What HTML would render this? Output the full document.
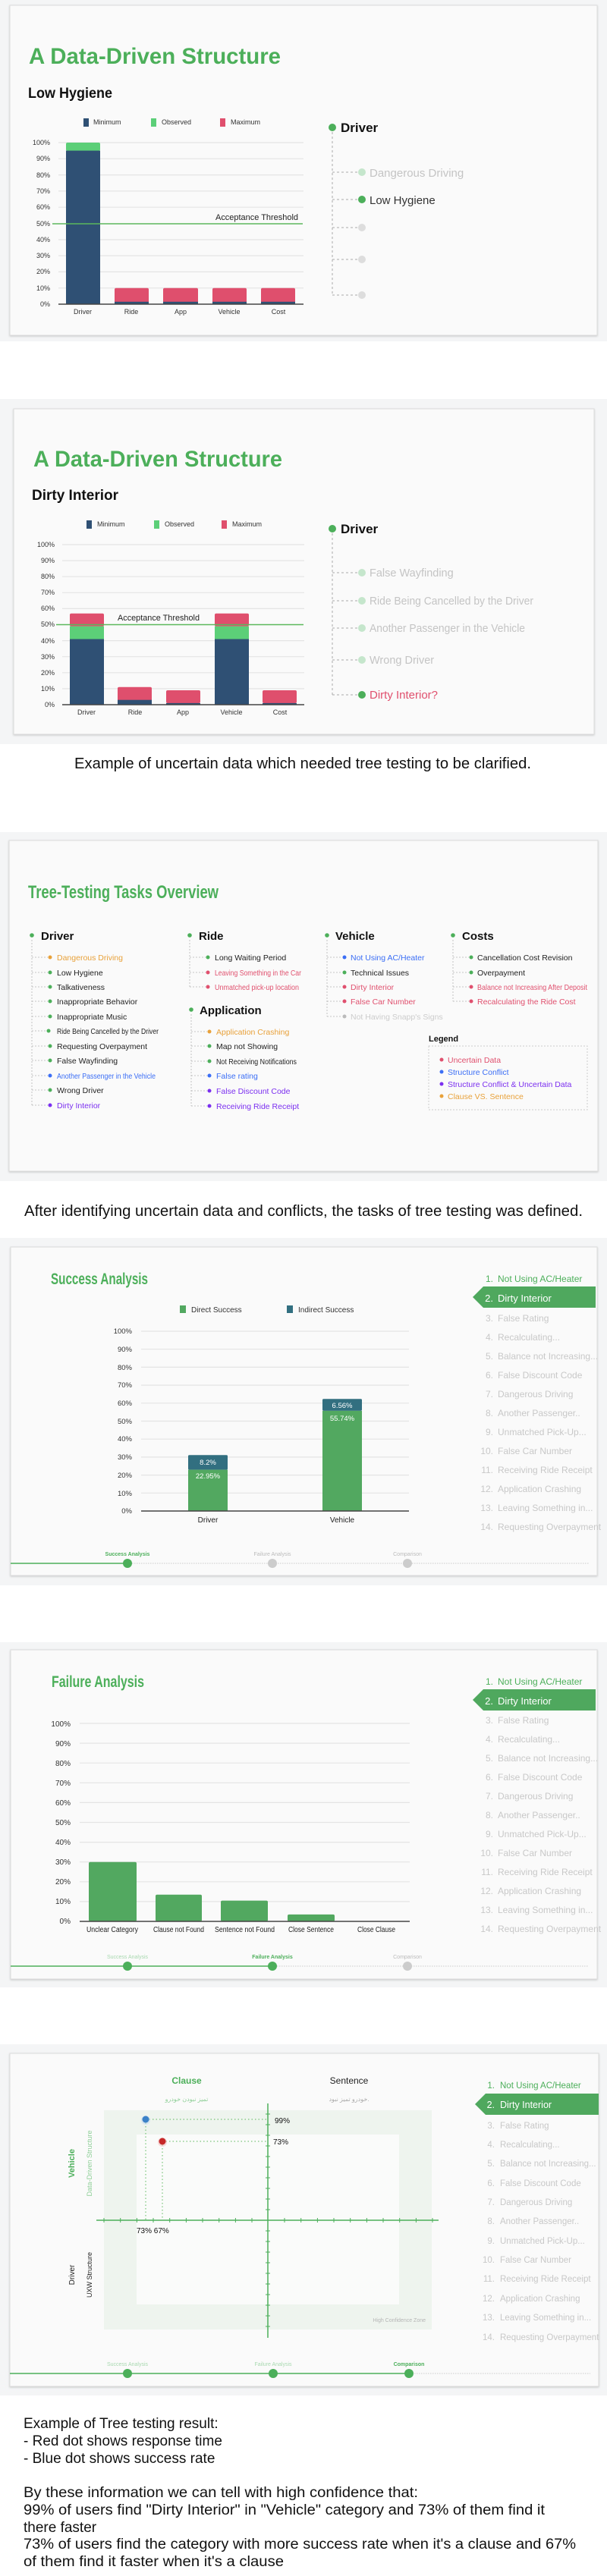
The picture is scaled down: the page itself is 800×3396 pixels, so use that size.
<!DOCTYPE html>
<html><head><meta charset="utf-8"><style>
html,body{margin:0;padding:0;background:#fff;}
svg{display:block;}
text{font-family:"Liberation Sans","Noto Sans CJK SC",sans-serif;}
</style></head><body>
<svg width="800" height="3396" viewBox="0 0 800 3396" xmlns="http://www.w3.org/2000/svg">
<defs>
<filter id="sh" x="-5%" y="-5%" width="110%" height="110%"><feDropShadow dx="0" dy="1" stdDeviation="1.2" flood-color="#000" flood-opacity="0.18"/></filter>
</defs>
<rect width="800" height="3396" fill="#fff"/>

<!-- ===== CARD 1 ===== -->
<rect x="0" y="0" width="800" height="450" fill="#f4f5f6"/>
<rect x="13" y="7" width="774" height="435" fill="#fafafa" stroke="#dcdcdc" filter="url(#sh)"/>
<text x="38" y="84" font-size="30" font-weight="bold" fill="#4caf5a" textLength="332" lengthAdjust="spacingAndGlyphs">A Data-Driven Structure</text>
<text x="37" y="129" font-size="19" font-weight="bold" fill="#111" textLength="111" lengthAdjust="spacingAndGlyphs">Low Hygiene</text>
<g font-size="9" fill="#333">
<rect x="110" y="156" width="7" height="11" fill="#2f5074"/><text x="123" y="164">Minimum</text>
<rect x="199" y="156" width="7" height="11" fill="#5ccf78"/><text x="213" y="164">Observed</text>
<rect x="290" y="156" width="7" height="11" fill="#df4f6d"/><text x="304" y="164">Maximum</text>
</g>
<g stroke="#e4e4e4" stroke-width="1.2">
<line x1="77" x2="400" y1="188" y2="188"/><line x1="77" x2="400" y1="209.3" y2="209.3"/><line x1="77" x2="400" y1="230.6" y2="230.6"/><line x1="77" x2="400" y1="251.9" y2="251.9"/><line x1="77" x2="400" y1="273.2" y2="273.2"/><line x1="77" x2="400" y1="316" y2="316"/><line x1="77" x2="400" y1="337.1" y2="337.1"/><line x1="77" x2="400" y1="358.4" y2="358.4"/><line x1="77" x2="400" y1="379.7" y2="379.7"/>
</g>
<g font-size="9" fill="#333" text-anchor="end">
<text x="66" y="191">100%</text><text x="66" y="212">90%</text><text x="66" y="234">80%</text><text x="66" y="255">70%</text><text x="66" y="276">60%</text><text x="66" y="298">50%</text><text x="66" y="319">40%</text><text x="66" y="340">30%</text><text x="66" y="361">20%</text><text x="66" y="383">10%</text><text x="66" y="404">0%</text>
</g>
<rect x="87" y="188" width="45" height="11" fill="#5ccf78" rx="2"/>
<rect x="87" y="198.6" width="45" height="202.4" fill="#2f5074"/>
<g fill="#df4f6d"><rect x="151" y="379.7" width="45" height="20" rx="2"/><rect x="215" y="379.7" width="46" height="20" rx="2"/><rect x="280" y="379.7" width="45" height="20" rx="2"/><rect x="344" y="379.7" width="45" height="20" rx="2"/></g>
<g fill="#2f5074"><rect x="151" y="397.8" width="45" height="3.2"/><rect x="215" y="397.8" width="46" height="3.2"/><rect x="280" y="397.8" width="45" height="3.2"/><rect x="344" y="397.8" width="45" height="3.2"/></g>
<line x1="77" x2="400" y1="401" y2="401" stroke="#444" stroke-width="1.5"/>
<line x1="69" x2="399" y1="295" y2="295" stroke="#5cb85c" stroke-width="1.5"/>
<text x="284" y="290" font-size="11" fill="#222" textLength="109" lengthAdjust="spacingAndGlyphs">Acceptance Threshold</text>
<g font-size="9" fill="#333" text-anchor="middle"><text x="109" y="414">Driver</text><text x="173" y="414">Ride</text><text x="238" y="414">App</text><text x="302" y="414">Vehicle</text><text x="367" y="414">Cost</text></g>
<g stroke="#aaa" stroke-dasharray="3,3" fill="none"><path d="M438 174 V389 M438 227 H472 M438 263 H472 M438 300 H472 M438 342 H472 M438 389 H472"/></g>
<circle cx="438" cy="168" r="5" fill="#4caf5a"/>
<text x="449" y="174" font-size="17" font-weight="bold" fill="#111">Driver</text>
<circle cx="477" cy="227" r="5" fill="#c5e6cc"/><text x="487" y="233" font-size="15" fill="#c4c4c4">Dangerous Driving</text>
<circle cx="477" cy="263" r="5" fill="#4caf5a"/><text x="487" y="269" font-size="15" fill="#333">Low Hygiene</text>
<circle cx="477" cy="300" r="5" fill="#ddd"/><circle cx="477" cy="342" r="5" fill="#ddd"/><circle cx="477" cy="389" r="5" fill="#ddd"/>

<!-- ===== CARD 2 ===== -->
<rect x="0" y="526" width="800" height="455" fill="#f4f5f6"/>
<rect x="18" y="539" width="765" height="429" fill="#fafafa" stroke="#dcdcdc" filter="url(#sh)"/>
<text x="44" y="615" font-size="30" font-weight="bold" fill="#4caf5a" textLength="328" lengthAdjust="spacingAndGlyphs">A Data-Driven Structure</text>
<text x="42" y="659" font-size="19" font-weight="bold" fill="#111" textLength="114" lengthAdjust="spacingAndGlyphs">Dirty Interior</text>
<g font-size="9" fill="#333">
<rect x="114" y="686" width="7" height="11" fill="#2f5074"/><text x="128" y="694">Minimum</text>
<rect x="203" y="686" width="7" height="11" fill="#5ccf78"/><text x="217" y="694">Observed</text>
<rect x="292" y="686" width="7" height="11" fill="#df4f6d"/><text x="306" y="694">Maximum</text>
</g>
<g stroke="#e4e4e4" stroke-width="1.2">
<line x1="82" x2="401" y1="718" y2="718"/><line x1="82" x2="401" y1="739.1" y2="739.1"/><line x1="82" x2="401" y1="760.2" y2="760.2"/><line x1="82" x2="401" y1="781.3" y2="781.3"/><line x1="82" x2="401" y1="802.4" y2="802.4"/><line x1="82" x2="401" y1="844.6" y2="844.6"/><line x1="82" x2="401" y1="865.7" y2="865.7"/><line x1="82" x2="401" y1="886.8" y2="886.8"/><line x1="82" x2="401" y1="907.9" y2="907.9"/>
</g>
<g font-size="9" fill="#333" text-anchor="end">
<text x="72" y="721">100%</text><text x="72" y="742">90%</text><text x="72" y="763">80%</text><text x="72" y="784">70%</text><text x="72" y="805">60%</text><text x="72" y="826">50%</text><text x="72" y="848">40%</text><text x="72" y="869">30%</text><text x="72" y="890">20%</text><text x="72" y="911">10%</text><text x="72" y="932">0%</text>
</g>
<rect x="92" y="808.7" width="45" height="17" fill="#df4f6d" rx="2"/><rect x="92" y="825.6" width="45" height="16.9" fill="#5ccf78"/><rect x="92" y="842.5" width="45" height="86.5" fill="#2f5074"/>
<rect x="283" y="808.7" width="45" height="17" fill="#df4f6d" rx="2"/><rect x="283" y="825.6" width="45" height="16.9" fill="#5ccf78"/><rect x="283" y="842.5" width="45" height="86.5" fill="#2f5074"/>
<rect x="155" y="905.8" width="45" height="20" fill="#df4f6d" rx="2"/><rect x="155" y="922.7" width="45" height="6.3" fill="#2f5074"/>
<rect x="219" y="910" width="45" height="17" fill="#df4f6d" rx="2"/><rect x="219" y="926.9" width="45" height="2.1" fill="#2f5074"/>
<rect x="346" y="910" width="45" height="17" fill="#df4f6d" rx="2"/><rect x="346" y="926.9" width="45" height="2.1" fill="#2f5074"/>
<line x1="82" x2="401" y1="929" y2="929" stroke="#444" stroke-width="1.5"/>
<line x1="74" x2="400" y1="823.5" y2="823.5" stroke="#5cb85c" stroke-width="1.5"/>
<text x="155" y="818" font-size="11" fill="#222" textLength="108" lengthAdjust="spacingAndGlyphs">Acceptance Threshold</text>
<g font-size="9" fill="#333" text-anchor="middle"><text x="114" y="942">Driver</text><text x="178" y="942">Ride</text><text x="241" y="942">App</text><text x="305" y="942">Vehicle</text><text x="369" y="942">Cost</text></g>
<g stroke="#aaa" stroke-dasharray="3,3" fill="none"><path d="M438 703 V916 M438 755 H472 M438 792 H472 M438 828 H472 M438 870 H472 M438 916 H472"/></g>
<circle cx="438" cy="697" r="5" fill="#4caf5a"/>
<text x="449" y="703" font-size="17" font-weight="bold" fill="#111">Driver</text>
<g font-size="14.5" fill="#c4c4c4">
<circle cx="477" cy="755" r="5" fill="#c5e6cc"/><text x="487" y="760">False Wayfinding</text>
<circle cx="477" cy="792" r="5" fill="#c5e6cc"/><text x="487" y="797" textLength="216" lengthAdjust="spacingAndGlyphs">Ride Being Cancelled by the Driver</text>
<circle cx="477" cy="828" r="5" fill="#c5e6cc"/><text x="487" y="833" textLength="205" lengthAdjust="spacingAndGlyphs">Another Passenger in the Vehicle</text>
<circle cx="477" cy="870" r="5" fill="#c5e6cc"/><text x="487" y="875">Wrong Driver</text>
</g>
<circle cx="477" cy="916" r="5" fill="#4caf5a"/><text x="487" y="921" font-size="15" fill="#e0506e">Dirty Interior?</text>

<text x="98" y="1013" font-size="20" fill="#111" textLength="602" lengthAdjust="spacingAndGlyphs">Example of uncertain data which needed tree testing to be clarified.</text>

<!-- ===== CARD 3 ===== -->
<rect x="0" y="1097" width="800" height="460" fill="#f4f5f6"/>
<rect x="12" y="1108" width="776" height="436" fill="#fafafa" stroke="#dcdcdc" filter="url(#sh)"/>
<text x="37" y="1184" font-size="24" font-weight="bold" fill="#4caf5a" textLength="251" lengthAdjust="spacingAndGlyphs">Tree-Testing Tasks Overview</text>
<g stroke="#b5b5b5" stroke-dasharray="2,2" fill="none" stroke-width="0.8">
<path d="M42 1239 V1457 M42 1262 H63 M42 1282 H63 M42 1301 H63 M42 1320 H63 M42 1340 H63 M42 1359 H63 M42 1379 H63 M42 1398 H63 M42 1418 H63 M42 1437 H63 M42 1457 H63"/>
<path d="M250 1239 V1301 M250 1262 H271 M250 1282 H271 M250 1301 H271"/>
<path d="M252 1337 V1458 M252 1360 H273 M252 1379 H273 M252 1399 H273 M252 1418 H273 M252 1438 H273 M252 1458 H273"/>
<path d="M431 1239 V1340 M431 1262 H451 M431 1282 H451 M431 1301 H451 M431 1320 H451 M431 1340 H451"/>
<path d="M597 1239 V1320 M597 1262 H618 M597 1282 H618 M597 1301 H618 M597 1320 H618"/>
</g>
<g font-size="15" font-weight="bold" fill="#111">
<circle cx="42" cy="1233" r="2.8" fill="#4caf5a"/><text x="54" y="1239">Driver</text>
<circle cx="250" cy="1233" r="2.8" fill="#4caf5a"/><text x="262" y="1239">Ride</text>
<circle cx="431" cy="1233" r="2.8" fill="#4caf5a"/><text x="442" y="1239">Vehicle</text>
<circle cx="597" cy="1233" r="2.8" fill="#4caf5a"/><text x="609" y="1239">Costs</text>
<circle cx="252" cy="1331" r="2.8" fill="#4caf5a"/><text x="263" y="1337">Application</text>
</g>
<g font-size="10.5">
<circle cx="66" cy="1262" r="2.5" fill="#e8a13a"/><text x="75" y="1266" fill="#e8a13a">Dangerous Driving</text>
<circle cx="66" cy="1282" r="2.5" fill="#4caf5a"/><text x="75" y="1286" fill="#222">Low Hygiene</text>
<circle cx="66" cy="1301" r="2.5" fill="#4caf5a"/><text x="75" y="1305" fill="#222">Talkativeness</text>
<circle cx="66" cy="1320" r="2.5" fill="#4caf5a"/><text x="75" y="1324" fill="#222">Inappropriate Behavior</text>
<circle cx="66" cy="1340" r="2.5" fill="#4caf5a"/><text x="75" y="1344" fill="#222">Inappropriate Music</text>
<circle cx="64" cy="1359" r="2.5" fill="#4caf5a"/><text x="75" y="1363" fill="#222" textLength="134" lengthAdjust="spacingAndGlyphs">Ride Being Cancelled by the Driver</text>
<circle cx="66" cy="1379" r="2.5" fill="#4caf5a"/><text x="75" y="1383" fill="#222">Requesting Overpayment</text>
<circle cx="66" cy="1398" r="2.5" fill="#4caf5a"/><text x="75" y="1402" fill="#222">False Wayfinding</text>
<circle cx="66" cy="1418" r="2.5" fill="#3b6ef5"/><text x="75" y="1422" fill="#3b6ef5" textLength="130" lengthAdjust="spacingAndGlyphs">Another Passenger in the Vehicle</text>
<circle cx="66" cy="1437" r="2.5" fill="#4caf5a"/><text x="75" y="1441" fill="#222">Wrong Driver</text>
<circle cx="66" cy="1457" r="2.5" fill="#7b2ff0"/><text x="75" y="1461" fill="#7b2ff0">Dirty Interior</text>

<circle cx="274" cy="1262" r="2.5" fill="#4caf5a"/><text x="283" y="1266" fill="#222">Long Waiting Period</text>
<circle cx="274" cy="1282" r="2.5" fill="#e0506e"/><text x="283" y="1286" fill="#e0506e" textLength="114" lengthAdjust="spacingAndGlyphs">Leaving Something in the Car</text>
<circle cx="274" cy="1301" r="2.5" fill="#e0506e"/><text x="283" y="1305" fill="#e0506e" textLength="111" lengthAdjust="spacingAndGlyphs">Unmatched pick-up location</text>

<circle cx="276" cy="1360" r="2.5" fill="#e8a13a"/><text x="285" y="1364" fill="#e8a13a">Application Crashing</text>
<circle cx="276" cy="1379" r="2.5" fill="#4caf5a"/><text x="285" y="1383" fill="#222">Map not Showing</text>
<circle cx="276" cy="1399" r="2.5" fill="#4caf5a"/><text x="285" y="1403" fill="#222" textLength="106" lengthAdjust="spacingAndGlyphs">Not Receiving Notifications</text>
<circle cx="276" cy="1418" r="2.5" fill="#3b6ef5"/><text x="285" y="1422" fill="#3b6ef5">False rating</text>
<circle cx="276" cy="1438" r="2.5" fill="#7b2ff0"/><text x="285" y="1442" fill="#7b2ff0">False Discount Code</text>
<circle cx="276" cy="1458" r="2.5" fill="#7b2ff0"/><text x="285" y="1462" fill="#7b2ff0">Receiving Ride Receipt</text>

<circle cx="454" cy="1262" r="2.5" fill="#3b6ef5"/><text x="462" y="1266" fill="#3b6ef5">Not Using AC/Heater</text>
<circle cx="454" cy="1282" r="2.5" fill="#4caf5a"/><text x="462" y="1286" fill="#222">Technical Issues</text>
<circle cx="454" cy="1301" r="2.5" fill="#e0506e"/><text x="462" y="1305" fill="#e0506e">Dirty Interior</text>
<circle cx="454" cy="1320" r="2.5" fill="#e0506e"/><text x="462" y="1324" fill="#e0506e">False Car Number</text>
<circle cx="454" cy="1340" r="2.5" fill="#bbb"/><text x="462" y="1344" fill="#ccc">Not Having Snapp's Signs</text>

<circle cx="621" cy="1262" r="2.5" fill="#4caf5a"/><text x="629" y="1266" fill="#222">Cancellation Cost Revision</text>
<circle cx="621" cy="1282" r="2.5" fill="#4caf5a"/><text x="629" y="1286" fill="#222">Overpayment</text>
<circle cx="621" cy="1301" r="2.5" fill="#e0506e"/><text x="629" y="1305" fill="#e0506e" textLength="145" lengthAdjust="spacingAndGlyphs">Balance not Increasing After Deposit</text>
<circle cx="621" cy="1320" r="2.5" fill="#e0506e"/><text x="629" y="1324" fill="#e0506e">Recalculating the Ride Cost</text>
</g>
<text x="565" y="1373" font-size="11" font-weight="bold" fill="#111">Legend</text>
<rect x="565" y="1379" width="209" height="84" fill="none" stroke="#ccc" stroke-dasharray="2,2"/>
<g font-size="10.5">
<circle cx="582" cy="1397" r="2.5" fill="#e0506e"/><text x="590" y="1401" fill="#e0506e">Uncertain Data</text>
<circle cx="582" cy="1413" r="2.5" fill="#3b6ef5"/><text x="590" y="1417" fill="#3b6ef5">Structure Conflict</text>
<circle cx="582" cy="1429" r="2.5" fill="#7b2ff0"/><text x="590" y="1433" fill="#7b2ff0">Structure Conflict &amp; Uncertain Data</text>
<circle cx="582" cy="1445" r="2.5" fill="#e8a13a"/><text x="590" y="1449" fill="#e8a13a">Clause VS. Sentence</text>
</g>

<text x="32" y="1603" font-size="20" fill="#111" textLength="736" lengthAdjust="spacingAndGlyphs">After identifying uncertain data and conflicts, the tasks of tree testing was defined.</text>

<!-- ===== CARD 4 ===== -->
<rect x="0" y="1632" width="800" height="458" fill="#f4f5f6"/>
<rect x="14" y="1644" width="773" height="433" fill="#fafafa" stroke="#dcdcdc" filter="url(#sh)"/>
<text x="67" y="1693" font-size="21" font-weight="bold" fill="#4caf5a" textLength="128" lengthAdjust="spacingAndGlyphs">Success Analysis</text>
<g font-size="10" fill="#333">
<rect x="237" y="1721" width="8" height="10" fill="#52a860"/><text x="252" y="1730">Direct Success</text>
<rect x="378" y="1721" width="8" height="10" fill="#326f80"/><text x="393" y="1730">Indirect Success</text>
</g>
<g stroke="#e4e4e4" stroke-width="1.2">
<line x1="186" x2="539" y1="1755" y2="1755"/><line x1="186" x2="539" y1="1778.7" y2="1778.7"/><line x1="186" x2="539" y1="1802.4" y2="1802.4"/><line x1="186" x2="539" y1="1826.1" y2="1826.1"/><line x1="186" x2="539" y1="1849.8" y2="1849.8"/><line x1="186" x2="539" y1="1873.5" y2="1873.5"/><line x1="186" x2="539" y1="1897.2" y2="1897.2"/><line x1="186" x2="539" y1="1920.9" y2="1920.9"/><line x1="186" x2="539" y1="1944.6" y2="1944.6"/><line x1="186" x2="539" y1="1968.3" y2="1968.3"/>
</g>
<g font-size="9.5" fill="#333" text-anchor="end">
<text x="174" y="1758">100%</text><text x="174" y="1782">90%</text><text x="174" y="1806">80%</text><text x="174" y="1829">70%</text><text x="174" y="1853">60%</text><text x="174" y="1877">50%</text><text x="174" y="1900">40%</text><text x="174" y="1924">30%</text><text x="174" y="1948">20%</text><text x="174" y="1972">10%</text><text x="174" y="1995">0%</text>
</g>
<rect x="248" y="1918.2" width="52" height="19.4" fill="#326f80" rx="1.5"/><rect x="248" y="1937.6" width="52" height="54.4" fill="#52a860"/>
<rect x="425" y="1844.3" width="52" height="15.6" fill="#326f80" rx="1.5"/><rect x="425" y="1859.9" width="52" height="132.1" fill="#52a860"/>
<g font-size="9.5" fill="#fff" text-anchor="middle"><text x="274" y="1931">8.2%</text><text x="274" y="1949">22.95%</text><text x="451" y="1856">6.56%</text><text x="451" y="1873">55.74%</text></g>
<line x1="186" x2="539" y1="1992" y2="1992" stroke="#444" stroke-width="1.5"/>
<g font-size="10" fill="#222" text-anchor="middle"><text x="274" y="2007">Driver</text><text x="451" y="2007">Vehicle</text></g>
<line x1="14" x2="168" y1="2061" y2="2061" stroke="#4caf5a" stroke-width="1.5"/>
<line x1="168" x2="776" y1="2061" y2="2061" stroke="#ccc" stroke-dasharray="1.5,1.5"/>
<circle cx="168" cy="2061" r="6" fill="#4caf5a"/><circle cx="359" cy="2061" r="6" fill="#ccc"/><circle cx="537" cy="2061" r="6" fill="#ccc"/>
<g font-size="7" text-anchor="middle"><text x="168" y="2051" fill="#4caf5a" font-weight="bold">Success Analysis</text><text x="359" y="2051" fill="#bbb">Failure Analysis</text><text x="537" y="2051" fill="#bbb">Comparison</text></g>

<!-- ===== CARD 5 ===== -->
<rect x="0" y="2165" width="800" height="455" fill="#f4f5f6"/>
<rect x="14" y="2175" width="773" height="434" fill="#fafafa" stroke="#dcdcdc" filter="url(#sh)"/>
<text x="68" y="2224" font-size="21" font-weight="bold" fill="#4caf5a" textLength="122" lengthAdjust="spacingAndGlyphs">Failure Analysis</text>
<g stroke="#e4e4e4" stroke-width="1.2">
<line x1="105" x2="540" y1="2272" y2="2272"/><line x1="105" x2="540" y1="2298.1" y2="2298.1"/><line x1="105" x2="540" y1="2324.2" y2="2324.2"/><line x1="105" x2="540" y1="2350.3" y2="2350.3"/><line x1="105" x2="540" y1="2376.4" y2="2376.4"/><line x1="105" x2="540" y1="2402.5" y2="2402.5"/><line x1="105" x2="540" y1="2428.6" y2="2428.6"/><line x1="105" x2="540" y1="2454.7" y2="2454.7"/><line x1="105" x2="540" y1="2480.8" y2="2480.8"/><line x1="105" x2="540" y1="2506.9" y2="2506.9"/>
</g>
<g font-size="10" fill="#333" text-anchor="end">
<text x="93" y="2276">100%</text><text x="93" y="2302">90%</text><text x="93" y="2328">80%</text><text x="93" y="2354">70%</text><text x="93" y="2380">60%</text><text x="93" y="2406">50%</text><text x="93" y="2432">40%</text><text x="93" y="2458">30%</text><text x="93" y="2484">20%</text><text x="93" y="2510">10%</text><text x="93" y="2536">0%</text>
</g>
<g fill="#52a860">
<rect x="117" y="2454.7" width="63" height="78.3" rx="2"/>
<rect x="205" y="2497.8" width="61" height="35.2" rx="2"/>
<rect x="291" y="2505.6" width="62" height="27.4" rx="2"/>
<rect x="379" y="2523.9" width="62" height="9.1" rx="2"/>
</g>
<line x1="105" x2="540" y1="2533" y2="2533" stroke="#444" stroke-width="1.5"/>
<g font-size="10" fill="#222">
<text x="114" y="2547" textLength="68" lengthAdjust="spacingAndGlyphs">Unclear Category</text>
<text x="202" y="2547" textLength="67" lengthAdjust="spacingAndGlyphs">Clause not Found</text>
<text x="283" y="2547" textLength="79" lengthAdjust="spacingAndGlyphs">Sentence not Found</text>
<text x="380" y="2547" textLength="60" lengthAdjust="spacingAndGlyphs">Close Sentence</text>
<text x="471" y="2547" textLength="50" lengthAdjust="spacingAndGlyphs">Close Clause</text>
</g>
<line x1="14" x2="359" y1="2592" y2="2592" stroke="#4caf5a" stroke-width="1.5"/>
<line x1="359" x2="776" y1="2592" y2="2592" stroke="#ccc" stroke-dasharray="1.5,1.5"/>
<circle cx="168" cy="2592" r="6" fill="#4caf5a"/><circle cx="359" cy="2592" r="6" fill="#4caf5a"/><circle cx="537" cy="2592" r="6" fill="#ccc"/>
<g font-size="7" text-anchor="middle"><text x="168" y="2582" fill="#a9d9b0">Success Analysis</text><text x="359" y="2582" fill="#4caf5a" font-weight="bold">Failure Analysis</text><text x="537" y="2582" fill="#bbb">Comparison</text></g>

<!-- ===== CARD 6 ===== -->
<rect x="0" y="2695" width="800" height="463" fill="#f4f5f6"/>
<rect x="13" y="2707" width="776" height="439" fill="#fafafa" stroke="#dcdcdc" filter="url(#sh)"/>
<text x="246" y="2747" font-size="12" font-weight="bold" fill="#4caf5a" text-anchor="middle">Clause</text>
<text x="460" y="2747" font-size="12" fill="#222" text-anchor="middle">Sentence</text>
<text x="246" y="2770" font-size="8" fill="#8fcf98" text-anchor="middle" font-family="DejaVu Sans, sans-serif">تمیز نبودن خودرو</text>
<text x="460" y="2770" font-size="8" fill="#aaa" text-anchor="middle" font-family="DejaVu Sans, sans-serif">خودرو تمیز نبود.</text>
<rect x="137" y="2782" width="432" height="289" fill="#eef4ee"/>
<rect x="180" y="2814" width="346" height="224" fill="#fafbfa"/>
<text x="561" y="3061" font-size="7" fill="#b5b5b5" text-anchor="end">High Confidence Zone</text>
<g stroke="#4caf5a" stroke-width="1.5">
<line x1="353" x2="353" y1="2773" y2="3082"/>
<line x1="127" x2="578" y1="2927" y2="2927"/>
</g>
<g stroke="#4caf5a" stroke-width="1">
<path d="M137 2924v6M158.7 2924v6M180.4 2924v6M202 2924v6M223.7 2924v6M245.4 2924v6M267 2924v6M288.7 2924v6M310.4 2924v6M332 2924v6M375 2924v6M396.7 2924v6M418.4 2924v6M440 2924v6M461.7 2924v6M483.4 2924v6M505 2924v6M526.7 2924v6M548.4 2924v6M570 2924v6"/>
<path d="M350 2787h6M350 2801h6M350 2815h6M350 2829h6M350 2843h6M350 2857h6M350 2871h6M350 2885h6M350 2899h6M350 2913h6M350 2941h6M350 2955h6M350 2969h6M350 2983h6M350 2997h6M350 3011h6M350 3025h6M350 3039h6M350 3053h6M350 3067h6"/>
</g>
<g stroke="#5cb85c" stroke-width="1" stroke-dasharray="1.5,3">
<path d="M192 2794 H352 M192 2794 V2926 M214 2823 H352 M214 2823 V2926"/>
</g>
<circle cx="192" cy="2795" r="6" fill="#c9dcf2" opacity="0.6"/>
<circle cx="192" cy="2794" r="4.5" fill="#3b82c8"/>
<circle cx="214" cy="2824" r="6" fill="#f3c4c4" opacity="0.6"/>
<circle cx="214" cy="2823" r="4.5" fill="#c62828"/>
<g font-size="10" fill="#111"><text x="362" y="2799">99%</text><text x="360" y="2827">73%</text><text x="180" y="2944">73% 67%</text></g>
<g font-size="10" text-anchor="middle">
<text transform="translate(98 2852) rotate(-90)" font-weight="bold" fill="#4caf5a" font-size="11">Vehicle</text>
<text transform="translate(121 2852) rotate(-90)" fill="#8fcf98" font-size="9">Data-Driven Structure</text>
<text transform="translate(98 2999) rotate(-90)" fill="#222" font-size="10">Driver</text>
<text transform="translate(121 2999) rotate(-90)" fill="#222" font-size="9">UXW Structure</text>
</g>
<line x1="13" x2="537" y1="3129" y2="3129" stroke="#4caf5a" stroke-width="1.5"/>
<line x1="537" x2="778" y1="3129" y2="3129" stroke="#ccc" stroke-dasharray="1.5,1.5"/>
<circle cx="168" cy="3129" r="6" fill="#4caf5a"/><circle cx="360" cy="3129" r="6" fill="#4caf5a"/><circle cx="539" cy="3129" r="6" fill="#4caf5a"/>
<g font-size="7" text-anchor="middle"><text x="168" y="3119" fill="#a9d9b0">Success Analysis</text><text x="360" y="3119" fill="#a9d9b0">Failure Analysis</text><text x="539" y="3119" fill="#4caf5a" font-weight="bold">Comparison</text></g>

<!-- ===== RIGHT LISTS ===== -->
<g font-size="12">
<text x="650" y="1690" fill="#4caf5a" text-anchor="end">1.</text><text x="656" y="1690" fill="#4caf5a">Not Using AC/Heater</text>
<path d="M623 1710 L637 1696 H785 V1724 H637 Z" fill="#4fa85e"/>
<text x="650" y="1716" fill="#fff" text-anchor="end" font-size="13">2.</text><text x="656" y="1716" fill="#fff" font-size="13">Dirty Interior</text>
<g fill="#c8c8c8">
<text x="650" y="1742" text-anchor="end">3.</text><text x="656" y="1742">False Rating</text>
<text x="650" y="1767" text-anchor="end">4.</text><text x="656" y="1767">Recalculating...</text>
<text x="650" y="1792" text-anchor="end">5.</text><text x="656" y="1792">Balance not Increasing...</text>
<text x="650" y="1817" text-anchor="end">6.</text><text x="656" y="1817">False Discount Code</text>
<text x="650" y="1842" text-anchor="end">7.</text><text x="656" y="1842">Dangerous Driving</text>
<text x="650" y="1867" text-anchor="end">8.</text><text x="656" y="1867">Another Passenger..</text>
<text x="650" y="1892" text-anchor="end">9.</text><text x="656" y="1892">Unmatched Pick-Up...</text>
<text x="650" y="1917" text-anchor="end">10.</text><text x="656" y="1917">False Car Number</text>
<text x="650" y="1942" text-anchor="end">11.</text><text x="656" y="1942">Receiving Ride Receipt</text>
<text x="650" y="1967" text-anchor="end">12.</text><text x="656" y="1967">Application Crashing</text>
<text x="650" y="1992" text-anchor="end">13.</text><text x="656" y="1992">Leaving Something in...</text>
<text x="650" y="2017" text-anchor="end">14.</text><text x="656" y="2017">Requesting Overpayment</text>
</g>
</g>
<g font-size="12">
<text x="650" y="2221" fill="#4caf5a" text-anchor="end">1.</text><text x="656" y="2221" fill="#4caf5a">Not Using AC/Heater</text>
<path d="M623 2241 L637 2227 H785 V2255 H637 Z" fill="#4fa85e"/>
<text x="650" y="2247" fill="#fff" text-anchor="end" font-size="13">2.</text><text x="656" y="2247" fill="#fff" font-size="13">Dirty Interior</text>
<g fill="#c8c8c8">
<text x="650" y="2272" text-anchor="end">3.</text><text x="656" y="2272">False Rating</text>
<text x="650" y="2297" text-anchor="end">4.</text><text x="656" y="2297">Recalculating...</text>
<text x="650" y="2322" text-anchor="end">5.</text><text x="656" y="2322">Balance not Increasing...</text>
<text x="650" y="2347" text-anchor="end">6.</text><text x="656" y="2347">False Discount Code</text>
<text x="650" y="2372" text-anchor="end">7.</text><text x="656" y="2372">Dangerous Driving</text>
<text x="650" y="2397" text-anchor="end">8.</text><text x="656" y="2397">Another Passenger..</text>
<text x="650" y="2422" text-anchor="end">9.</text><text x="656" y="2422">Unmatched Pick-Up...</text>
<text x="650" y="2447" text-anchor="end">10.</text><text x="656" y="2447">False Car Number</text>
<text x="650" y="2472" text-anchor="end">11.</text><text x="656" y="2472">Receiving Ride Receipt</text>
<text x="650" y="2497" text-anchor="end">12.</text><text x="656" y="2497">Application Crashing</text>
<text x="650" y="2522" text-anchor="end">13.</text><text x="656" y="2522">Leaving Something in...</text>
<text x="650" y="2547" text-anchor="end">14.</text><text x="656" y="2547">Requesting Overpayment</text>
</g>
</g>
<g font-size="11.5">
<text x="652" y="2753" fill="#4caf5a" text-anchor="end">1.</text><text x="659" y="2753" fill="#4caf5a">Not Using AC/Heater</text>
<path d="M626 2774 L640 2760 H789 V2788 H640 Z" fill="#4fa85e"/>
<text x="652" y="2779" fill="#fff" text-anchor="end" font-size="12.5">2.</text><text x="659" y="2779" fill="#fff" font-size="12.5">Dirty Interior</text>
<g fill="#c8c8c8">
<text x="652" y="2806" text-anchor="end">3.</text><text x="659" y="2806">False Rating</text>
<text x="652" y="2831" text-anchor="end">4.</text><text x="659" y="2831">Recalculating...</text>
<text x="652" y="2856" text-anchor="end">5.</text><text x="659" y="2856">Balance not Increasing...</text>
<text x="652" y="2882" text-anchor="end">6.</text><text x="659" y="2882">False Discount Code</text>
<text x="652" y="2907" text-anchor="end">7.</text><text x="659" y="2907">Dangerous Driving</text>
<text x="652" y="2932" text-anchor="end">8.</text><text x="659" y="2932">Another Passenger..</text>
<text x="652" y="2958" text-anchor="end">9.</text><text x="659" y="2958">Unmatched Pick-Up...</text>
<text x="652" y="2983" text-anchor="end">10.</text><text x="659" y="2983">False Car Number</text>
<text x="652" y="3008" text-anchor="end">11.</text><text x="659" y="3008">Receiving Ride Receipt</text>
<text x="652" y="3034" text-anchor="end">12.</text><text x="659" y="3034">Application Crashing</text>
<text x="652" y="3059" text-anchor="end">13.</text><text x="659" y="3059">Leaving Something in...</text>
<text x="652" y="3085" text-anchor="end">14.</text><text x="659" y="3085">Requesting Overpayment</text>
</g>
</g>

<!-- ===== BOTTOM TEXT ===== -->
<g font-size="19" fill="#111">
<text x="31" y="3201">Example of Tree testing result:</text>
<text x="31" y="3224">- Red dot shows response time</text>
<text x="31" y="3247">- Blue dot shows success rate</text>
<text x="31" y="3292" textLength="520" lengthAdjust="spacingAndGlyphs">By these information we can tell with high confidence that:</text>
<text x="31" y="3315" textLength="687" lengthAdjust="spacingAndGlyphs">99% of users find "Dirty Interior" in "Vehicle" category and 73% of them find it</text>
<text x="31" y="3338">there faster</text>
<text x="31" y="3360" textLength="728" lengthAdjust="spacingAndGlyphs">73% of users find the category with more success rate when it's a clause and 67%</text>
<text x="31" y="3383" textLength="343" lengthAdjust="spacingAndGlyphs">of them find it faster when it's a clause</text>
</g>
</svg>
</body></html>
